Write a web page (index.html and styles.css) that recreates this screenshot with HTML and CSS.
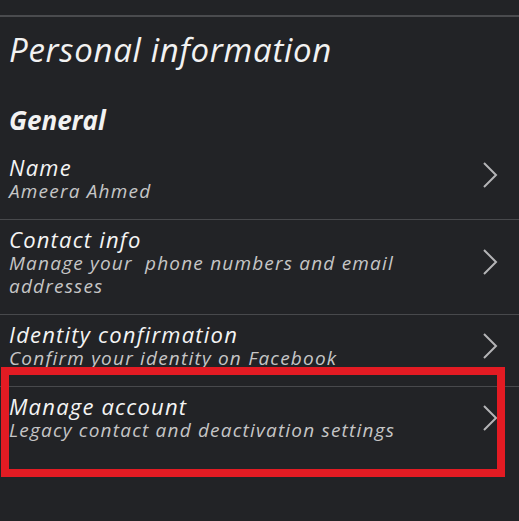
FILE: index.html
```html
<!DOCTYPE html>
<html lang="en">
<head>
    <meta charset="UTF-8">
    <meta name="viewport" content="width=device-width, initial-scale=1.0">
    <title>Personal information</title>
    <link rel="stylesheet" href="styles.css">
</head>
<body>
    <div class="topbar"></div>

    <h1 class="page-title">Personal information</h1>
    <h2 class="section-title">General</h2>

    <div class="settings-list">
        <div class="row">
            <div class="row-text">
                <div class="row-title">Name</div>
                <div class="row-sub">Ameera Ahmed</div>
            </div>
            <svg class="chevron chevron-up" viewBox="0 0 16 28"><polyline points="2,2 14,14 2,26"/></svg>
        </div>
        <div class="row">
            <div class="row-text">
                <div class="row-title">Contact info</div>
                <div class="row-sub">Manage your &nbsp;phone numbers and email<br>addresses</div>
            </div>
            <svg class="chevron" viewBox="0 0 16 28"><polyline points="2,2 14,14 2,26"/></svg>
        </div>
        <div class="row">
            <div class="row-text">
                <div class="row-title">Identity confirmation</div>
                <div class="row-sub">Confirm your identity on Facebook</div>
            </div>
            <svg class="chevron" viewBox="0 0 16 28"><polyline points="2,2 14,14 2,26"/></svg>
        </div>
        <div class="row row-last">
            <div class="row-text">
                <div class="row-title">Manage account</div>
                <div class="row-sub">Legacy contact and deactivation settings</div>
            </div>
            <svg class="chevron" viewBox="0 0 16 28"><polyline points="2,2 14,14 2,26"/></svg>
            <div class="highlight-box"></div>
        </div>
    </div>
</body>
</html>
```

FILE: styles.css
```css
* {
    margin: 0;
    padding: 0;
    box-sizing: border-box;
}

body {
    font-family: 'Open Sans', 'Liberation Sans', sans-serif;
    background-color: #222326;
    color: #f2f2f2;
    height: 521px;
    overflow: hidden;
}

.topbar {
    height: 17px;
    border-bottom: 2px solid #4a4b4e;
}

.page-title {
    font-size: 33px;
    font-weight: 400;
    font-style: italic;
    line-height: 40px;
    letter-spacing: 0.7px;
    padding: 13px 0 0 9px;
}

.section-title {
    font-size: 26px;
    font-weight: 700;
    font-style: italic;
    line-height: 32px;
    padding: 34px 0 0 9px;
    margin-bottom: 12px;
}

.row {
    position: relative;
    display: flex;
    align-items: center;
    justify-content: space-between;
    padding: 6px 21px 16px 9px;
    border-bottom: 1px solid #48494c;
}

.row-last {
    border-bottom: none;
}

.row-title {
    font-size: 22px;
    line-height: 26px;
    font-style: italic;
    letter-spacing: 1.2px;
    color: #f4f4f4;
}

.row-sub {
    font-size: 19px;
    line-height: 23px;
    font-style: italic;
    letter-spacing: 1.2px;
    color: #c6c6c6;
}

.chevron {
    width: 16px;
    height: 28px;
    flex-shrink: 0;
}

.chevron-up {
    margin-bottom: 8px;
}

.chevron polyline {
    fill: none;
    stroke: #b4b4b6;
    stroke-width: 2;
}

.highlight-box {
    position: absolute;
    left: 1px;
    top: -20px;
    width: 504px;
    height: 110px;
    border: 8px solid #e31b23;
}
```
